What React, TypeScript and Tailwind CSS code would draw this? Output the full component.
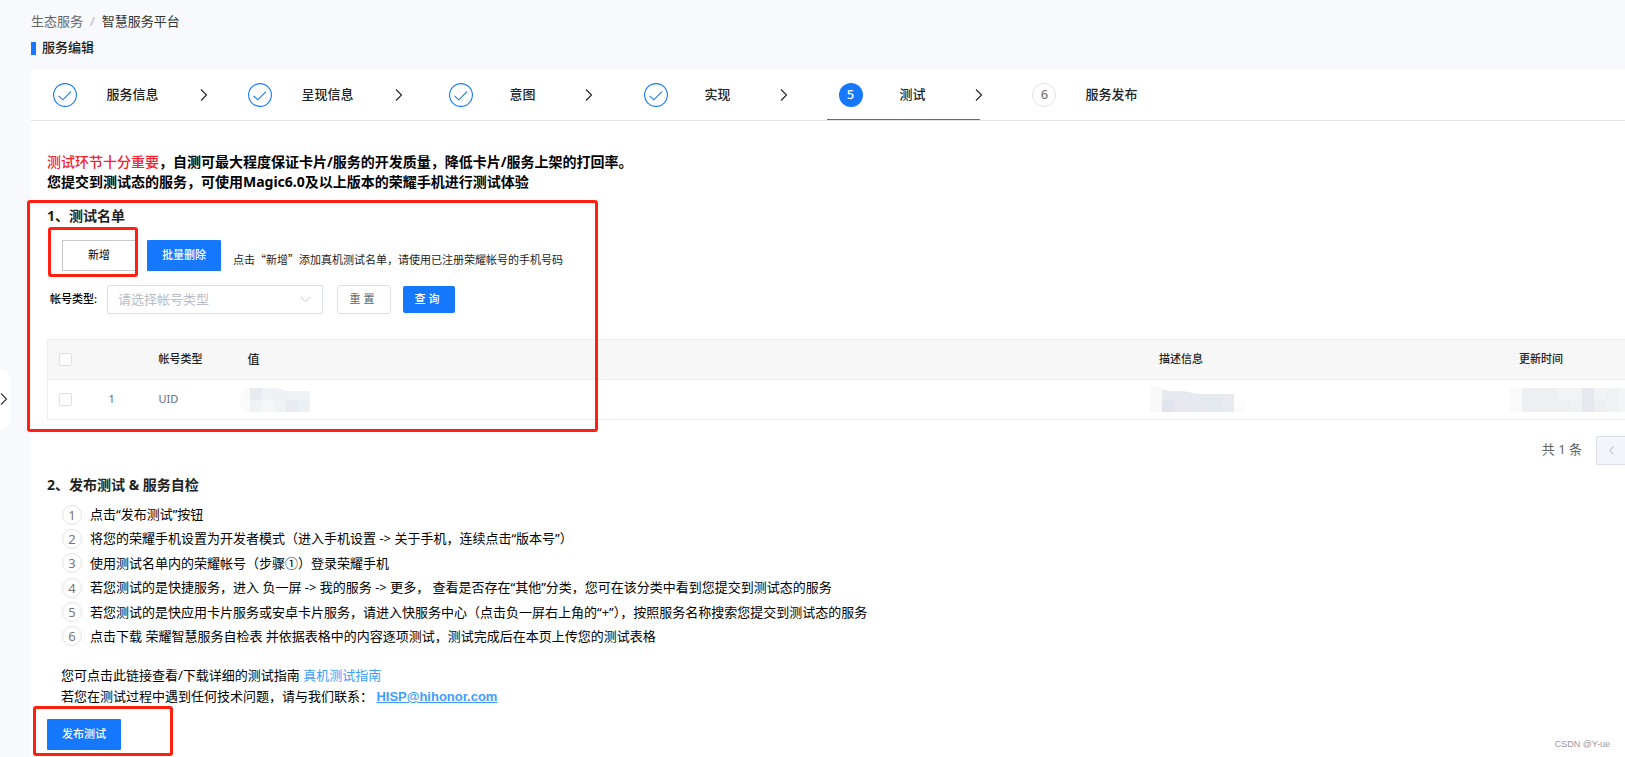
import type { ReactNode } from "react";

const steps = [
  { label: "服务信息", state: "done" },
  { label: "呈现信息", state: "done" },
  { label: "意图", state: "done" },
  { label: "实现", state: "done" },
  { label: "测试", state: "active" },
  { label: "服务发布", state: "todo" },
];

const instructions = [
  "点击“发布测试”按钮",
  "将您的荣耀手机设置为开发者模式（进入手机设置 -> 关于手机，连续点击“版本号”）",
  "使用测试名单内的荣耀帐号（步骤①）登录荣耀手机",
  "若您测试的是快捷服务，进入 负一屏 -> 我的服务 -> 更多， 查看是否存在“其他”分类，您可在该分类中看到您提交到测试态的服务",
  "若您测试的是快应用卡片服务或安卓卡片服务，请进入快服务中心（点击负一屏右上角的“+”），按照服务名称搜索您提交到测试态的服务",
  "点击下载 荣耀智慧服务自检表 并依据表格中的内容逐项测试，测试完成后在本页上传您的测试表格",
];

function ChevronRight({ className = "" }: { className?: string }) {
  return (
    <svg className={className} width="8" height="14" viewBox="0 0 8 14" fill="none" stroke="currentColor" strokeWidth="1.1" aria-hidden="true">
      <path d="M1 1.5 6.5 7 1 12.5" />
    </svg>
  );
}

function StepBadge({ state, index }: { state: string; index: number }) {
  if (state === "done") {
    return (
      <svg className="shrink-0" width="24" height="24" viewBox="0 0 24 24" fill="none" stroke="#1677ff" aria-hidden="true">
        <circle cx="12" cy="12" r="11.4" strokeWidth="1.1" />
        <path d="M5.5 12.8 9.8 16.8 18 8.7" strokeWidth="1.1" />
      </svg>
    );
  }
  const look = state === "active" ? "bg-[#1677ff] text-white" : "border border-[#e3e3e3] text-[#777777]";
  return <span className={`flex size-6 shrink-0 items-center justify-center rounded-full text-[13px] ${look}`}>{index}</span>;
}

function Checkbox({ label }: { label: string }) {
  return (
    <input
      type="checkbox"
      aria-label={label}
      className="block size-[13px] appearance-none rounded-[2px] border border-[#dcdfe6] bg-white checked:bg-[#1677ff]"
    />
  );
}

function Mosaic({ children, width }: { children: ReactNode; width: number }) {
  return (
    <svg className="block" width={width} height="26" viewBox={`0 0 ${width} 26`} aria-hidden="true">
      {children}
    </svg>
  );
}

export default function App() {
  return (
    <div className="relative min-h-screen overflow-x-hidden bg-[#f7f9fc] pl-[31px] font-['Noto_Sans','Noto_Sans_CJK_SC',sans-serif] text-[13px] text-black">
      <button
        type="button"
        aria-label="展开侧栏"
        className="absolute top-[369px] left-0 flex h-[60px] w-[10px] items-center rounded-r-[10px] bg-white text-[#303133]"
      >
        <ChevronRight />
      </button>

      <header className="pt-[11px] pb-3">
        <nav className="flex h-5 items-center gap-[7px] leading-5">
          <a href="#ecosystem" className="text-[#666666]">生态服务</a>
          <span className="text-[#b4b8bf]">/</span>
          <a href="#platform" className="text-[#333333]">智慧服务平台</a>
        </nav>
        <h1 className="mt-[7px] flex h-5 items-center gap-[6px] font-medium text-[#222222]">
          <span className="h-[13px] w-[5px] bg-[#1677ff]" />
          服务编辑
        </h1>
      </header>

      <main className="min-h-[687px] bg-white">
        <ol className="flex h-[51px] border-b border-[#e4e4e4] pl-[2px]">
          {steps.map((step, i) => (
            <li key={step.label} className="relative flex w-[195px] items-center justify-center font-medium text-[#222222] last:w-[203px]">
              <StepBadge state={step.state} index={i + 1} />
              <span className="ml-[29px] min-w-[42px] text-center">{step.label}</span>
              <ChevronRight className={i === steps.length - 1 ? "invisible ml-[41px]" : "ml-[41px]"} />
              {step.state === "active" && <span className="absolute right-7 bottom-0 left-[14px] h-px bg-[#1677ff]" />}
            </li>
          ))}
        </ol>

        <div className="pl-4">
          <p className="pt-[31px] text-[14px] leading-5 font-bold">
            <span className="font-medium text-[#f5222d]">测试环节十分重要</span>，自测可最大程度保证卡片/服务的开发质量，降低卡片/服务上架的打回率。
            <br />
            您提交到测试态的服务，可使用Magic6.0及以上版本的荣耀手机进行测试体验
          </p>

          <section className="relative pt-[14px]">
            <h2 className="text-[14px] leading-5 font-bold text-[#222222]">1、测试名单</h2>

            <div className="mt-[14px] flex items-center pl-[15px] text-[11px]">
              <button type="button" className="h-[31px] w-[74px] border border-[#c8c9cc] bg-white">新增</button>
              <button type="button" className="ml-[11px] h-[31px] w-[74px] rounded-[1px] bg-[#1677ff] font-medium text-white">批量删除</button>
              <p className="ml-3 pt-[6px] font-['Noto_Sans_CJK_SC',sans-serif] leading-4 text-[#222222]">点击“新增”添加真机测试名单，请使用已注册荣耀帐号的手机号码</p>
            </div>

            <form className="mt-[14px] flex items-center pl-[3px]" onSubmit={(e) => e.preventDefault()}>
              <label htmlFor="account-type" className="w-[57px] text-[11px] font-medium whitespace-nowrap">帐号类型:</label>
              <div className="relative flex">
                <select
                  id="account-type"
                  defaultValue=""
                  className="h-[29px] w-[216px] appearance-none rounded-[2px] border border-[#dcdfe6] bg-white pl-[10px] text-[13px] text-[#b8bdc7]"
                >
                  <option value="">请选择帐号类型</option>
                  <option value="uid">UID</option>
                </select>
                <svg className="pointer-events-none absolute top-[11px] right-3" width="11" height="7" viewBox="0 0 11 7" fill="none" stroke="#c0c4cc" aria-hidden="true">
                  <path d="M.7.8 5.5 5.8 10.3.8" />
                </svg>
              </div>
              <button type="button" className="ml-[14px] h-[29px] w-[54px] rounded-[3px] border border-[#dcdfe6] bg-white pr-1 text-[11px] text-[#606266]">重 置</button>
              <button type="submit" className="ml-3 h-[27px] w-[52px] rounded-[2px] bg-[#1677ff] pr-1 text-[11px] font-medium text-white">查 询</button>
            </form>

            <table className="mt-[25px] w-full table-fixed border-t border-l border-[#ebeef5] text-left text-[11px]">
              <colgroup>
                <col className="w-[36px]" />
                <col className="w-[65px]" />
                <col className="w-[89px]" />
                <col />
                <col className="w-[360px]" />
                <col className="w-[116px]" />
              </colgroup>
              <thead>
                <tr className="h-10 border-b border-[#ebeef5] bg-[#f7f7f7] text-[#222222]">
                  <th className="pl-[11px]"><Checkbox label="全选" /></th>
                  <th />
                  <th className="pl-[10px] font-medium">帐号类型</th>
                  <th className="pl-[10px] text-[12px] font-medium">值</th>
                  <th className="pl-[10px] font-medium">描述信息</th>
                  <th className="pl-[10px] font-medium">更新时间</th>
                </tr>
              </thead>
              <tbody>
                <tr className="h-10 border-b border-[#ebeef5] text-[#606b80]">
                  <td className="pl-[11px]"><Checkbox label="选择第 1 行" /></td>
                  <td className="pl-[25px]">1</td>
                  <td className="pl-[10px]">UID</td>
                  <td className="pb-[2px]">
                    <Mosaic width={90}>
                      <path d="M2 15Q2 3 14 2V26H10Q2 25 2 15Z" fill="#fafafa" />
                      <path d="M12 2H34Q43 2 48 5H72V26H12Z" fill="#eef2f5" />
                      <path d="M12 2H24V14H12ZM48 14H60V26H48Z" fill="#e7ebf0" />
                      <path d="M24 14H36V26H24Z" fill="#f5f6f9" />
                      <path d="M60 14H72V26H60Z" fill="#eaf0f4" />
                      <path d="M36 5H48V14H36Z" fill="#eef0f4" />
                    </Mosaic>
                  </td>
                  <td className="pb-[2px]">
                    <Mosaic width={100}>
                      <path d="M1 0Q10 0 13 3V26H1Z" fill="#f9f9f9" />
                      <path d="M84 14H96V26H84Z" fill="#fcfcfc" />
                      <path d="M13 3Q17 5 28 5T48 8H85V26H13Z" fill="#e6e9ef" />
                      <path d="M13 14H25V26H13Z" fill="#e0e4ed" />
                      <path d="M25 14H37V26H25Z" fill="#e7e7ed" />
                      <path d="M61 8H73V26H61Z" fill="#e4e9ed" />
                      <path d="M73 8H85V26H73Z" fill="#e9eaef" />
                    </Mosaic>
                  </td>
                  <td className="pb-[2px]">
                    <Mosaic width={116}>
                      <path d="M1 2H13V26H1Z" fill="#fafafa" />
                      <path d="M13 2H116V26H13Z" fill="#eeeff3" />
                      <path d="M49 2H73V14H49ZM85 2H97V14H85Z" fill="#f2f3f6" />
                      <path d="M73 2H85V26H73Z" fill="#e7e8ed" />
                      <path d="M61 14H73V26H61ZM97 2H109V26H97Z" fill="#eef2f5" />
                      <path d="M109 2H116V26H109Z" fill="#f2f6f6" />
                    </Mosaic>
                  </td>
                </tr>
              </tbody>
            </table>

            <div className="mt-4 flex items-center justify-end gap-[14px] text-[#606266]">
              <span className="pb-[2px]">共 1 条</span>
              <button type="button" disabled aria-label="上一页" className="flex h-[29px] w-[29px] items-center justify-center rounded-l-[2px] border border-r-0 border-[#dcdfe6] bg-[#f4f5fa] text-[#c0c4cc]">
                <svg width="5" height="9" viewBox="0 0 5 9" fill="none" stroke="currentColor" strokeWidth="1.1" aria-hidden="true">
                  <path d="M4.4.6.8 4.5 4.4 8.4" />
                </svg>
              </button>
            </div>

            <span className="pointer-events-none absolute top-2 -left-5 h-[232px] w-[571px] rounded-[3px] border-3 border-[#ff2012]" />
            <span className="pointer-events-none absolute top-[35px] left-px h-[50px] w-[90px] rounded-[3px] border-3 border-[#ff2012]" />
          </section>

          <section className="pt-[10px]">
            <h2 className="text-[14px] leading-5 font-bold text-[#222222]">2、发布测试 &amp; 服务自检</h2>
            <ol className="mt-[9px] flex h-[143px] flex-col justify-between pl-[15px]">
              {instructions.map((text, i) => (
                <li key={text} className="flex items-center gap-2 leading-5">
                  <span className="flex size-5 items-center justify-center rounded-full border border-[#e3e3e3] text-[#777777]">{i + 1}</span>
                  <span className="pb-px">{text}</span>
                </li>
              ))}
            </ol>
            <p className="mt-[18px] pl-[14px] leading-[21px]">
              您可点击此链接查看/下载详细的测试指南 <a href="#guide" className="text-[#409eff]">真机测试指南</a>
              <br />
              若您在测试过程中遇到任何技术问题，请与我们联系：{" "}
              <a href="mailto:HISP@hihonor.com" className="font-['Liberation_Sans',sans-serif] font-bold text-[#409eff] underline">HISP@hihonor.com</a>
            </p>
          </section>

          <div className="relative pt-3 pb-[7px]">
            <button type="button" className="block h-[31px] w-[74px] rounded-[1px] bg-[#1677ff] text-[11px] font-medium text-white">发布测试</button>
            <span className="pointer-events-none absolute -top-px -left-[14px] h-[50px] w-[140px] rounded-[3px] border-3 border-[#ff2012]" />
            <small className="absolute right-[15px] bottom-[6px] font-['Liberation_Sans',sans-serif] text-[9px] leading-[14px] text-[#999999]">CSDN @Y-ue</small>
          </div>
        </div>
      </main>
    </div>
  );
}
